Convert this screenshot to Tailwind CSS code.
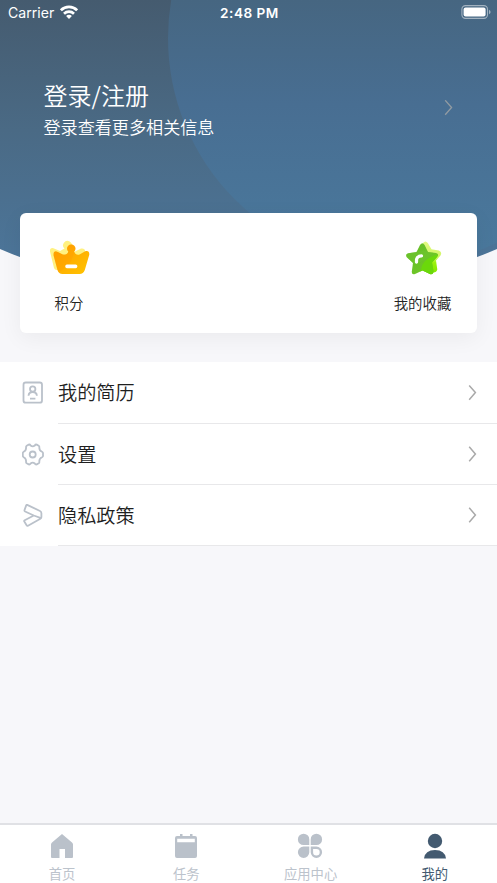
<!DOCTYPE html>
<html lang="zh-CN">
<head>
<meta charset="utf-8">
<meta name="viewport" content="width=device-width, initial-scale=1">
<title>我的</title>
<script src="https://cdn.jsdelivr.net/npm/@tailwindcss/browser@4"></script>
</head>
<body class="bg-[#f7f7fa] font-[Inter,'Noto_Sans_CJK_SC',sans-serif] text-[#222]">
<div class="flex h-[883px] w-[497px] flex-col overflow-hidden">
  <!-- Header -->
  <header class="relative h-[362px] shrink-0">
    <svg class="absolute inset-0" width="497" height="290" viewBox="0 0 497 290" aria-hidden="true">
      <defs>
        <linearGradient id="sky" x1="0" y1="0" x2="0" y2="260" gradientUnits="userSpaceOnUse">
          <stop offset="0" stop-color="#455b6f"/><stop offset=".5" stop-color="#4a6a85"/><stop offset="1" stop-color="#4c7599"/>
        </linearGradient>
        <linearGradient id="disc" x1="0" y1="0" x2="0" y2="260" gradientUnits="userSpaceOnUse">
          <stop offset="0" stop-color="#466681"/><stop offset=".4" stop-color="#486e92"/><stop offset="1" stop-color="#4a799d"/>
        </linearGradient>
        <clipPath id="dome"><path d="M0 0H497V249Q248.500 355 0 249Z"/></clipPath>
      </defs>
      <g clip-path="url(#dome)">
        <rect width="497" height="290" fill="url(#sky)"/>
        <circle cx="396" cy="38" r="228" fill="url(#disc)"/>
      </g>
    </svg>
    <div class="relative flex h-full flex-col">
      <div class="grid h-[26px] grid-cols-3 items-center pl-[8px] pr-[6px] text-white">
        <div class="flex items-center gap-[6px]">
          <span class="text-[14.1px] leading-[26px]">Carrier</span>
          <svg width="18" height="14" viewBox="0 0 18 14" fill="none" stroke="#fff" stroke-width="2.700" class="mb-[2px]"><path d="M.9 5.300C5.400.8 12.600.8 17.100 5.300M4 8.700C6.800 6 11.200 6 14 8.700"/><path d="M6.100 11C7.600 9.400 10.400 9.400 11.900 11L9 13.900Z" fill="#fff" stroke="none"/></svg>
        </div>
        <span class="text-center text-[13.6px] font-semibold tracking-[0.5px]">2:48 PM</span>
        <svg class="mb-[2px] justify-self-end" width="30" height="14" viewBox="0 0 30 14"><rect x=".9" y=".6" width="25.600" height="12.800" rx="3.600" fill="none" stroke="#a2b2c0" stroke-width="1.100"/><rect x="2.600" y="2.400" width="22" height="9.200" rx="2" fill="#fff"/><path d="M28 4.700Q29.600 5.500 29.600 7T28 9.300Z" fill="#a2b2c0"/></svg>
      </div>
      <div class="mt-[51px] flex h-[62px] items-center justify-between pl-[43.500px] pr-[44px] text-white">
        <div class="pt-[3px]">
          <h1 class="text-[24px] font-[350] leading-[34px] font-['Noto_Sans_CJK_SC',sans-serif]">登录/注册</h1>
          <p class="text-[17.1px] font-[350] leading-[29px] font-['Noto_Sans_CJK_SC',sans-serif]">登录查看更多相关信息</p>
        </div>
        <svg width="9" height="16" viewBox="0 0 9 16" fill="none" stroke="#929ba2" stroke-width="1.300"><path d="M1.200 .3L7.600 7.500L1.200 14.700"/></svg>
      </div>
      <section class="mx-[20px] mt-[74px] flex h-[120px] justify-between rounded-[6px] bg-white px-[24px] pt-[24px] text-[14.4px] shadow-[0_5px_22px_rgba(0,0,0,0.055)]">
        <div class="flex w-[50px] flex-col items-center">
          <svg width="44" height="44" viewBox="0 0 44 44" class="mb-[12px] ml-[2px]">
            <defs><linearGradient id="gold" x1="0" y1="0" x2="1" y2="1"><stop stop-color="#ff9c00"/><stop offset="1" stop-color="#ffc400"/></linearGradient></defs>
            <path d="M6 31L2 14.500Q1.500 10.500 5.500 11.200L12 14L16.500 11.500A4.400 4.400 0 1 1 23.500 10L26 15L33 11.600Q37.500 11 37 15L31 34L9 33Q6.500 33 6 31Z" fill="#fff181"/>
            <path d="M9.500 33L5.600 18.500C5 15.200 7 13.300 9.800 15L14.800 17.600Q19.500 18.300 20.300 14.600A4.200 4.200 0 1 1 26.200 14.600Q27.500 18.500 31.500 17.600L36.800 14.600C39.800 13.200 41.800 14.800 41.200 18L36.800 33Q35.400 37 31.500 37H14.500Q10.600 37 9.500 33Z" fill="url(#gold)"/>
            <path d="M19.500 17Q20.300 16.500 20.300 14.600A4.200 4.200 0 1 1 26.200 14.600Q24 29 10.500 35L9.500 33L5.600 18.500L9.800 15L14.800 17.600Z" fill="#ff9900" opacity=".3"/>
            <rect x="17.300" y="27.400" width="12" height="3.800" rx="1.600" fill="#fff"/>
          </svg>
          <span class="leading-[22px] font-[350]">积分</span>
        </div>
        <div class="flex w-[60px] flex-col items-center">
          <svg width="44" height="44" viewBox="0 0 44 44" class="mb-[12px] ml-[2px]">
            <defs><linearGradient id="leaf" x1="0" y1="0" x2="1" y2="1"><stop stop-color="#62b928"/><stop offset="1" stop-color="#75ce27"/></linearGradient><linearGradient id="lime" x1="0" y1="0" x2="0" y2="1"><stop stop-color="#e3fa82"/><stop offset=".5" stop-color="#cff562"/><stop offset=".65" stop-color="#9af20c"/><stop offset="1" stop-color="#82e700"/></linearGradient>
            <clipPath id="starclip"><path d="M18 8Q20.400 4.500 22.600 8L26 15L34 16Q37.500 17 35 20L30 25.500L31.500 34Q31.500 38 27.800 37L20.500 33.500L13 37Q9.500 38 9.800 34.500L11 26L4.800 20.300Q3 17 6.300 16.200L14.500 15Z"/></clipPath></defs>
            <path d="M21 6Q23.500 3 25.800 6L29.500 12.300L36.800 13.500Q40.500 15 38.500 18.500L34 23.500L35.300 32.500Q34.500 36 30.500 35.500L28 37L20 30Z" fill="url(#lime)"/>
            <g clip-path="url(#starclip)"><rect width="44" height="44" fill="url(#leaf)"/><path d="M4 14H32Q24 26 4 29Z" fill="#6fc52e" opacity=".45"/><path d="M38 17Q21 21 19.500 31L17 38H38Z" fill="#6bd80a"/></g>
            <path d="M14.500 25Q13.800 19 19.500 18.800" fill="none" stroke="#fff" stroke-width="3.300" stroke-linecap="round"/>
          </svg>
          <span class="mr-[1px] whitespace-nowrap leading-[22px] font-[350]">我的收藏</span>
        </div>
      </section>
    </div>
  </header>

  <!-- Menu -->
  <nav class="flex h-[184px] shrink-0 flex-col bg-white text-[19.2px] text-[#1f1f1f] font-[350]">
    <a class="flex h-[62px] items-stretch pl-[22px]">
      <svg class="mr-[14px] self-center" width="22" height="24" viewBox="0 0 22 24" fill="none" stroke="#bac1ca" stroke-width="1.800"><rect x="1.500" y="1.500" width="18.500" height="20.200" rx="2.300"/><circle cx="10.700" cy="8" r="2.700"/><path d="M6.500 14.800Q6.800 11 10.700 11T14.900 14.800M8 17.700H13.400"/></svg>
      <span class="flex flex-1 items-center justify-between border-b border-[#e8e8ea] pr-[20px]"><span class="pt-[1px]">我的简历</span>
        <svg width="9" height="16" viewBox="0 0 9 16" fill="none" stroke="#a9a9a9" stroke-width="1.500"><path d="M1.200 .5L7.400 7.600L1.200 14.700"/></svg></span>
    </a>
    <a class="flex h-[61px] items-stretch pl-[22px]">
      <svg class="mr-[14px] self-center" width="22" height="24" viewBox="0 0 22 24" fill="none" stroke="#bac1ca" stroke-width="1.800" stroke-linejoin="round"><path d="M6.700 1.600Q7.900 1.200 8.600 2.500Q10.700 4.300 12.800 2.500Q13.500 1.200 14.700 1.600L16.700 2.700Q17.600 3.300 17.300 4.700Q17.300 7.600 20 8.800Q21.300 9.500 21 10.700V12.300Q21.300 13.500 20 14.200Q17.300 15.400 17.300 18.300Q17.600 19.700 16.700 20.300L14.700 21.400Q13.500 21.800 12.800 20.500Q10.700 18.700 8.600 20.500Q7.900 21.800 6.700 21.400L4.700 20.300Q3.800 19.700 4.100 18.300Q4.100 15.400 1.700 14.200Q.6 13.500.8 12.300V10.700Q.6 9.500 1.700 8.800Q4.100 7.600 4.100 4.700Q3.800 3.300 4.700 2.700Z"/><circle cx="10.700" cy="11.500" r="3"/></svg>
      <span class="flex flex-1 items-center justify-between border-b border-[#e8e8ea] pr-[20px]"><span class="pt-[2px]">设置</span>
        <svg width="9" height="16" viewBox="0 0 9 16" fill="none" stroke="#a9a9a9" stroke-width="1.500"><path d="M1.200 .8L7.400 8L1.200 15.200"/></svg></span>
    </a>
    <a class="flex h-[61px] items-stretch pl-[22px]">
      <svg class="mr-[14px] self-center" width="22" height="24" viewBox="0 0 22 24" fill="none" stroke="#bac1ca" stroke-width="1.800" stroke-linejoin="round"><path d="M5.200 .9L18 7Q19.400 7.700 19.400 9.200V13Q19.400 14.200 18.400 14.700L6 21.700Q5.100 22.100 4.600 21.300L2.300 17.600Q1.800 16.700 2.700 16.200L11.800 11.500L3.100 7.500Q2.200 7 2.500 6.100L4.200 1.400Q4.500 .6 5.200 .9ZM11.800 11.500L19 14.200"/></svg>
      <span class="flex flex-1 items-center justify-between border-b border-[#e8e8ea] pr-[20px]"><span class="pt-[2px]">隐私政策</span>
        <svg width="9" height="16" viewBox="0 0 9 16" fill="none" stroke="#a9a9a9" stroke-width="1.500"><path d="M1.200 .8L7.400 8L1.200 15.200"/></svg></span>
    </a>
  </nav>

  <div class="flex-1"></div>

  <!-- Tab bar -->
  <footer class="grid h-[60px] shrink-0 grid-cols-4 border-t-2 border-[#e0e1e5] bg-white text-[13.3px] text-[#bcc3cc]">
    <div class="flex flex-col items-center pt-[8px]">
      <svg width="26" height="26" viewBox="0 0 26 26" fill="#bac1ca"><path d="M13 1L23 9.500Q24 10.300 24 11.500V24Q24 25 23 25H16V16H10.500V25H3Q2 25 2 24V11.500Q2 10.300 3 9.500Z"/></svg>
      <span class="mt-[5px] leading-[20px]">首页</span>
    </div>
    <div class="flex flex-col items-center pt-[8px]">
      <svg width="26" height="26" viewBox="0 0 26 26" fill="#bac1ca"><path fill-rule="evenodd" d="M7 1H9.500V3H17V1H19.500V3H22Q24 3 24 5V23Q24 25 22 25H4Q2 25 2 23V5Q2 3 4 3H7ZM4.200 5.800V9.300H21.800V5.800Z"/></svg>
      <span class="mt-[5px] leading-[20px]">任务</span>
    </div>
    <div class="flex flex-col items-center pt-[8px]">
      <svg width="26" height="26" viewBox="0 0 26 26" fill="#bac1ca" class="-ml-[1px]"><path d="M12.300 12.100H6.600A5.700 5.700 0 1 1 12.300 6.400ZM13.700 12.100V6.400A5.700 5.700 0 1 1 19.400 12.100ZM12.300 13.500V19.200A5.700 5.700 0 1 1 6.600 13.500Z"/><path d="M14.900 14.700H19.400A4.500 4.500 0 1 1 14.900 19.200Z" fill="none" stroke="#bac1ca" stroke-width="2.400"/></svg>
      <span class="mt-[5px] leading-[20px]">应用中心</span>
    </div>
    <div class="flex flex-col items-center pt-[8px] text-[#435a70]">
      <svg width="26" height="26" viewBox="0 0 26 26" fill="#435a70"><circle cx="13" cy="8" r="7.200"/><path d="M2 25.500Q3 17 13 17T24 25.500Z"/></svg>
      <span class="mt-[5px] leading-[20px]">我的</span>
    </div>
  </footer>
</div>
</body>
</html>
